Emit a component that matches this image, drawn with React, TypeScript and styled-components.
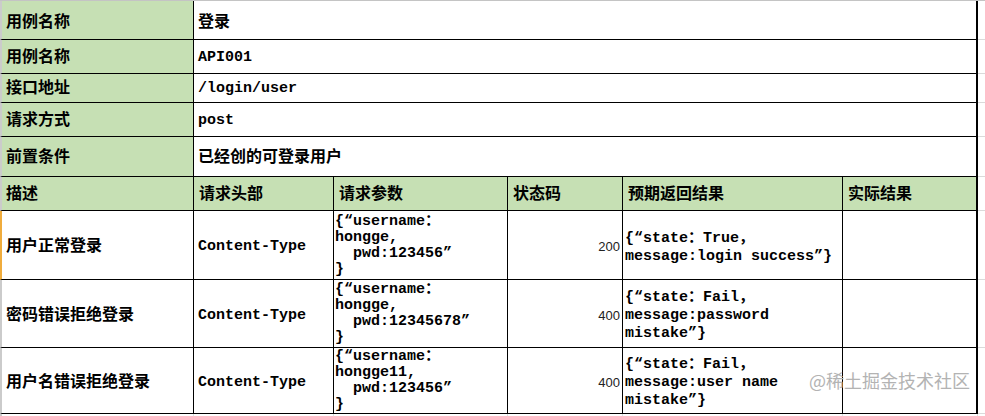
import React from "react";
import styled, { createGlobalStyle } from "styled-components";

const GlobalStyle = createGlobalStyle`
  html, body { margin: 0; padding: 0; background: #ffffff; }
  body { font-family: "Liberation Mono", "Noto Sans CJK SC", monospace; color: #000; }
`;

const Sheet = styled.div`
  position: relative;
  width: 985px;
  height: 416px;
  overflow: hidden;
  border-top: 1px solid #c4c4c4;
  box-sizing: border-box;
`;

const TOP_COLS = "194px 784px 1fr";
const TABLE_COLS = "194px 140px 174px 115px 220px 135px 1fr";

const Row = styled.div<{ $h: number; $cols: string }>`
  display: grid;
  grid-template-columns: ${(p) => p.$cols};
  height: ${(p) => p.$h}px;
`;

const Cell = styled.div<{
  $green?: boolean;
  $edge?: "gray" | "orange";
  $thick?: boolean;
  $cjk?: boolean;
  $pad?: number;
  $lh?: number;
  $shift?: number;
}>`
  box-sizing: border-box;
  display: flex;
  align-items: center;
  overflow: hidden;
  background: ${(p) => (p.$green ? "#c6e0b4" : "#ffffff")};
  border-right: ${(p) => (p.$thick ? 2 : 1)}px solid #000;
  border-bottom: 1px solid #000;
  border-left: ${(p) =>
    p.$edge ? `2px solid ${p.$edge === "orange" ? "#f0ac3c" : "#cbcbcb"}` : "none"};
  padding-left: ${(p) => p.$pad ?? 4}px;
  padding-top: ${(p) => p.$shift ?? 2}px;
  font-size: ${(p) => (p.$cjk ? 16 : 15)}px;
  font-weight: 700;
  line-height: ${(p) => p.$lh ?? 16}px;
  white-space: pre;
`;

const NumberCell = styled.div`
  box-sizing: border-box;
  display: flex;
  align-items: center;
  justify-content: flex-end;
  border-right: 1px solid #000;
  border-bottom: 1px solid #000;
  padding-right: 2px;
  padding-top: 3px;
  font-family: "Liberation Sans", "DejaVu Sans", sans-serif;
  font-size: 13px;
  font-weight: 400;
  color: #222;
`;

const Gutter = styled.div`
  border-bottom: 1px solid #dadada;
`;

const TailCell = styled.div<{ $edge?: boolean }>`
  box-sizing: border-box;
  border-right: 1px solid #e0e0e0;
  border-left: ${(p) => (p.$edge ? "2px solid #cbcbcb" : "none")};
`;

const Watermark = styled.div`
  position: absolute;
  left: 809px;
  top: 367px;
  font-family: "Noto Sans CJK SC", sans-serif;
  font-size: 18px;
  line-height: 24px;
  color: #b3b3b3;
  white-space: nowrap;
`;

const topRows: { label: string; value: string; h: number; shift?: number; cjk?: boolean }[] = [
  { label: "用例名称", value: "登录", h: 39, shift: 5, cjk: true },
  { label: "用例名称", value: "API001", h: 34 },
  { label: "接口地址", value: "/login/user", h: 29 },
  { label: "请求方式", value: "post", h: 34 },
  { label: "前置条件", value: "已经创的可登录用户", h: 40, shift: 3, cjk: true },
];

const headers = ["描述", "请求头部", "请求参数", "状态码", "预期返回结果", "实际结果"];

const cases = [
  {
    desc: "用户正常登录",
    header: "Content-Type",
    params: "{“username：\nhongge,\n  pwd:123456”\n}",
    code: "200",
    expect: "{“state：True，\nmessage:login success”}",
    h: 69,
    selected: true,
  },
  {
    desc: "密码错误拒绝登录",
    header: "Content-Type",
    params: "{“username：\nhongge,\n  pwd:12345678”\n}",
    code: "400",
    expect: "{“state：Fail，\nmessage:password\nmistake”}",
    h: 68,
    selected: false,
  },
  {
    desc: "用户名错误拒绝登录",
    header: "Content-Type",
    params: "{“username：\nhongge11,\n  pwd:123456”\n}",
    code: "400",
    expect: "{“state：Fail，\nmessage:user name\nmistake”}",
    h: 66,
    selected: false,
  },
];

export default function App() {
  return (
    <>
      <GlobalStyle />
      <Sheet>
        {topRows.map((r, i) => (
          <Row key={i} $h={r.h} $cols={TOP_COLS}>
            <Cell $green $cjk $edge="gray" $shift={r.shift}>
              {r.label}
            </Cell>
            <Cell $thick $cjk={r.cjk} $shift={r.shift}>
              {r.value}
            </Cell>
            <Gutter />
          </Row>
        ))}
        <Row $h={34} $cols={TABLE_COLS}>
          {headers.map((h, i) => (
            <Cell
              key={h}
              $green
              $cjk
              $edge={i === 0 ? "gray" : undefined}
              $thick={i === headers.length - 1}
              $pad={i === 0 ? 4 : 5}
            >
              {h}
            </Cell>
          ))}
          <Gutter />
        </Row>
        {cases.map((c, i) => (
          <Row key={i} $h={c.h} $cols={TABLE_COLS}>
            <Cell $cjk $shift={4} $edge={c.selected ? "orange" : "gray"}>
              {c.desc}
            </Cell>
            <Cell $shift={4}>{c.header}</Cell>
            <Cell $pad={1} $shift={1}>
              {c.params}
            </Cell>
            <NumberCell>{c.code}</NumberCell>
            <Cell $pad={2} $lh={18} $shift={5}>
              {c.expect}
            </Cell>
            <Cell $thick />
            <Gutter />
          </Row>
        ))}
        <Row $h={4} $cols={TABLE_COLS}>
          <TailCell $edge />
          <TailCell />
          <TailCell />
          <TailCell />
          <TailCell />
          <TailCell />
          <div />
        </Row>
        <Watermark>@稀土掘金技术社区</Watermark>
      </Sheet>
    </>
  );
}
